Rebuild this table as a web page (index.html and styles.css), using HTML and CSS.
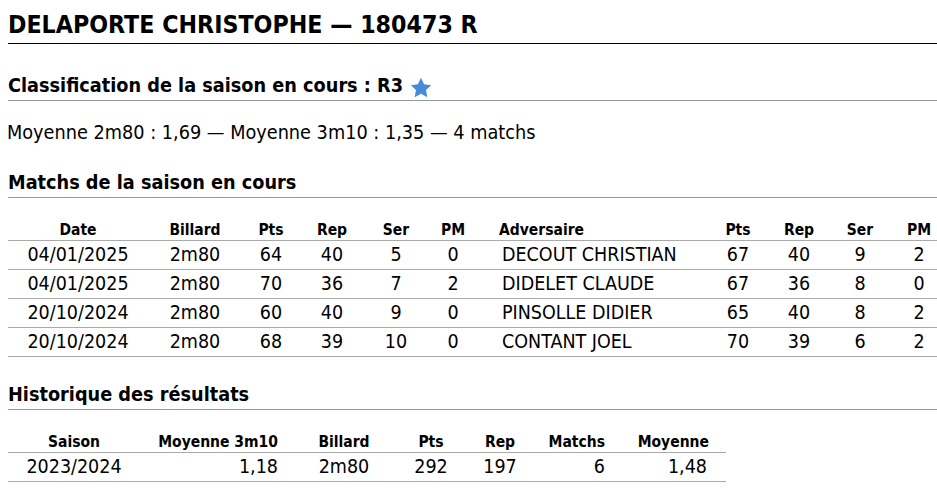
FILE: index.html
```html
<!DOCTYPE html>
<html lang="fr">
<head>
<meta charset="utf-8">
<title>DELAPORTE CHRISTOPHE</title>
<link rel="stylesheet" href="styles.css">
</head>
<body>
<h1 class="title">DELAPORTE CHRISTOPHE — 180473 R</h1>
<h2 class="section first">Classification de la saison en cours : R3 <svg class="star" viewBox="0 0 24 24" aria-hidden="true"><path d="M12 1.8l3.1 6.5 7.1.9-5.2 4.9 1.3 7.1L12 17.8l-6.3 3.4 1.3-7.1-5.2-4.9 7.1-.9z"/></svg></h2>
<p class="summary">Moyenne 2m80 : 1,69 — Moyenne 3m10 : 1,35 — 4 matchs</p>

<h2 class="section">Matchs de la saison en cours</h2>
<table class="grid matches">
  <colgroup>
    <col class="w140"><col class="w94"><col class="w58"><col class="w64"><col class="w64"><col class="w50"><col class="w219"><col class="w82"><col class="w40"><col class="w82"><col class="w36">
  </colgroup>
  <thead>
    <tr><th>Date</th><th>Billard</th><th>Pts</th><th>Rep</th><th>Ser</th><th>PM</th><th class="adv">Adversaire</th><th>Pts</th><th>Rep</th><th>Ser</th><th>PM</th></tr>
  </thead>
  <tbody>
    <tr><td>04/01/2025</td><td>2m80</td><td>64</td><td>40</td><td>5</td><td>0</td><td class="adv">DECOUT CHRISTIAN</td><td>67</td><td>40</td><td>9</td><td>2</td></tr>
    <tr><td>04/01/2025</td><td>2m80</td><td>70</td><td>36</td><td>7</td><td>2</td><td class="adv">DIDELET CLAUDE</td><td>67</td><td>36</td><td>8</td><td>0</td></tr>
    <tr><td>20/10/2024</td><td>2m80</td><td>60</td><td>40</td><td>9</td><td>0</td><td class="adv">PINSOLLE DIDIER</td><td>65</td><td>40</td><td>8</td><td>2</td></tr>
    <tr><td>20/10/2024</td><td>2m80</td><td>68</td><td>39</td><td>10</td><td>0</td><td class="adv">CONTANT JOEL</td><td>70</td><td>39</td><td>6</td><td>2</td></tr>
  </tbody>
</table>

<h2 class="section">Historique des résultats</h2>
<table class="grid history">
  <colgroup>
    <col class="w132"><col class="w140"><col class="w128"><col class="w46"><col class="w92"><col class="w61"><col class="w119">
  </colgroup>
  <thead>
    <tr><th>Saison</th><th class="right">Moyenne 3m10</th><th>Billard</th><th>Pts</th><th>Rep</th><th class="right">Matchs</th><th class="right last">Moyenne</th></tr>
  </thead>
  <tbody>
    <tr><td>2023/2024</td><td class="right">1,18</td><td>2m80</td><td>292</td><td>197</td><td class="right">6</td><td class="right last">1,48</td></tr>
  </tbody>
</table>
</body>
</html>
```

FILE: styles.css
```css
html, body {
  background: #ffffff;
}

body {
  margin: 8px 0 0 8px;
  font-family: "DejaVu Sans Condensed", "DejaVu Sans", sans-serif;
  color: #000000;
}

.title {
  margin: 3px 0 0 0;
  padding: 0 0 4px 0;
  font-size: 24.7px;
  line-height: 28px;
  font-weight: bold;
  border-bottom: 1px solid #000000;
}

.section {
  margin: 26px 0 0 0;
  padding: 0 0 2px 0;
  font-size: 19.7px;
  line-height: 24px;
  font-weight: bold;
  border-bottom: 1px solid #999999;
}

.section.first {
  margin-top: 30px;
}

.star {
  width: 24px;
  height: 24px;
  margin: -2px 0 -2px 0;
  vertical-align: -6px;
  fill: #4a89d8;
}

.summary {
  margin: 20px 0 0 -1px;
  font-size: 19.7px;
  line-height: 24px;
}

.grid {
  margin-top: 22px;
  border-collapse: separate;
  border-spacing: 0;
  table-layout: fixed;
}

.matches {
  width: 929px;
}

.history {
  width: 718px;
}

.grid th {
  padding: 0;
  font-size: 15.5px;
  line-height: 20px;
  font-weight: bold;
  text-align: center;
  border-bottom: 1px solid #aaaaaa;
}

.grid td {
  padding: 0;
  font-size: 19.5px;
  line-height: 28px;
  text-align: center;
  border-bottom: 1px solid #aaaaaa;
  white-space: nowrap;
}

.grid th.adv {
  text-align: left;
  padding-left: 21px;
}

.grid td.adv {
  text-align: left;
  padding-left: 24px;
}

.grid .right {
  text-align: right;
  padding-right: 2px;
}

.grid th.last {
  padding-right: 17px;
}

.grid td.last {
  padding-right: 19px;
}

.w36 { width: 36px; }
.w40 { width: 40px; }
.w46 { width: 46px; }
.w50 { width: 50px; }
.w58 { width: 58px; }
.w61 { width: 61px; }
.w64 { width: 64px; }
.w82 { width: 82px; }
.w92 { width: 92px; }
.w94 { width: 94px; }
.w119 { width: 119px; }
.w128 { width: 128px; }
.w132 { width: 132px; }
.w140 { width: 140px; }
.w219 { width: 219px; }
```
